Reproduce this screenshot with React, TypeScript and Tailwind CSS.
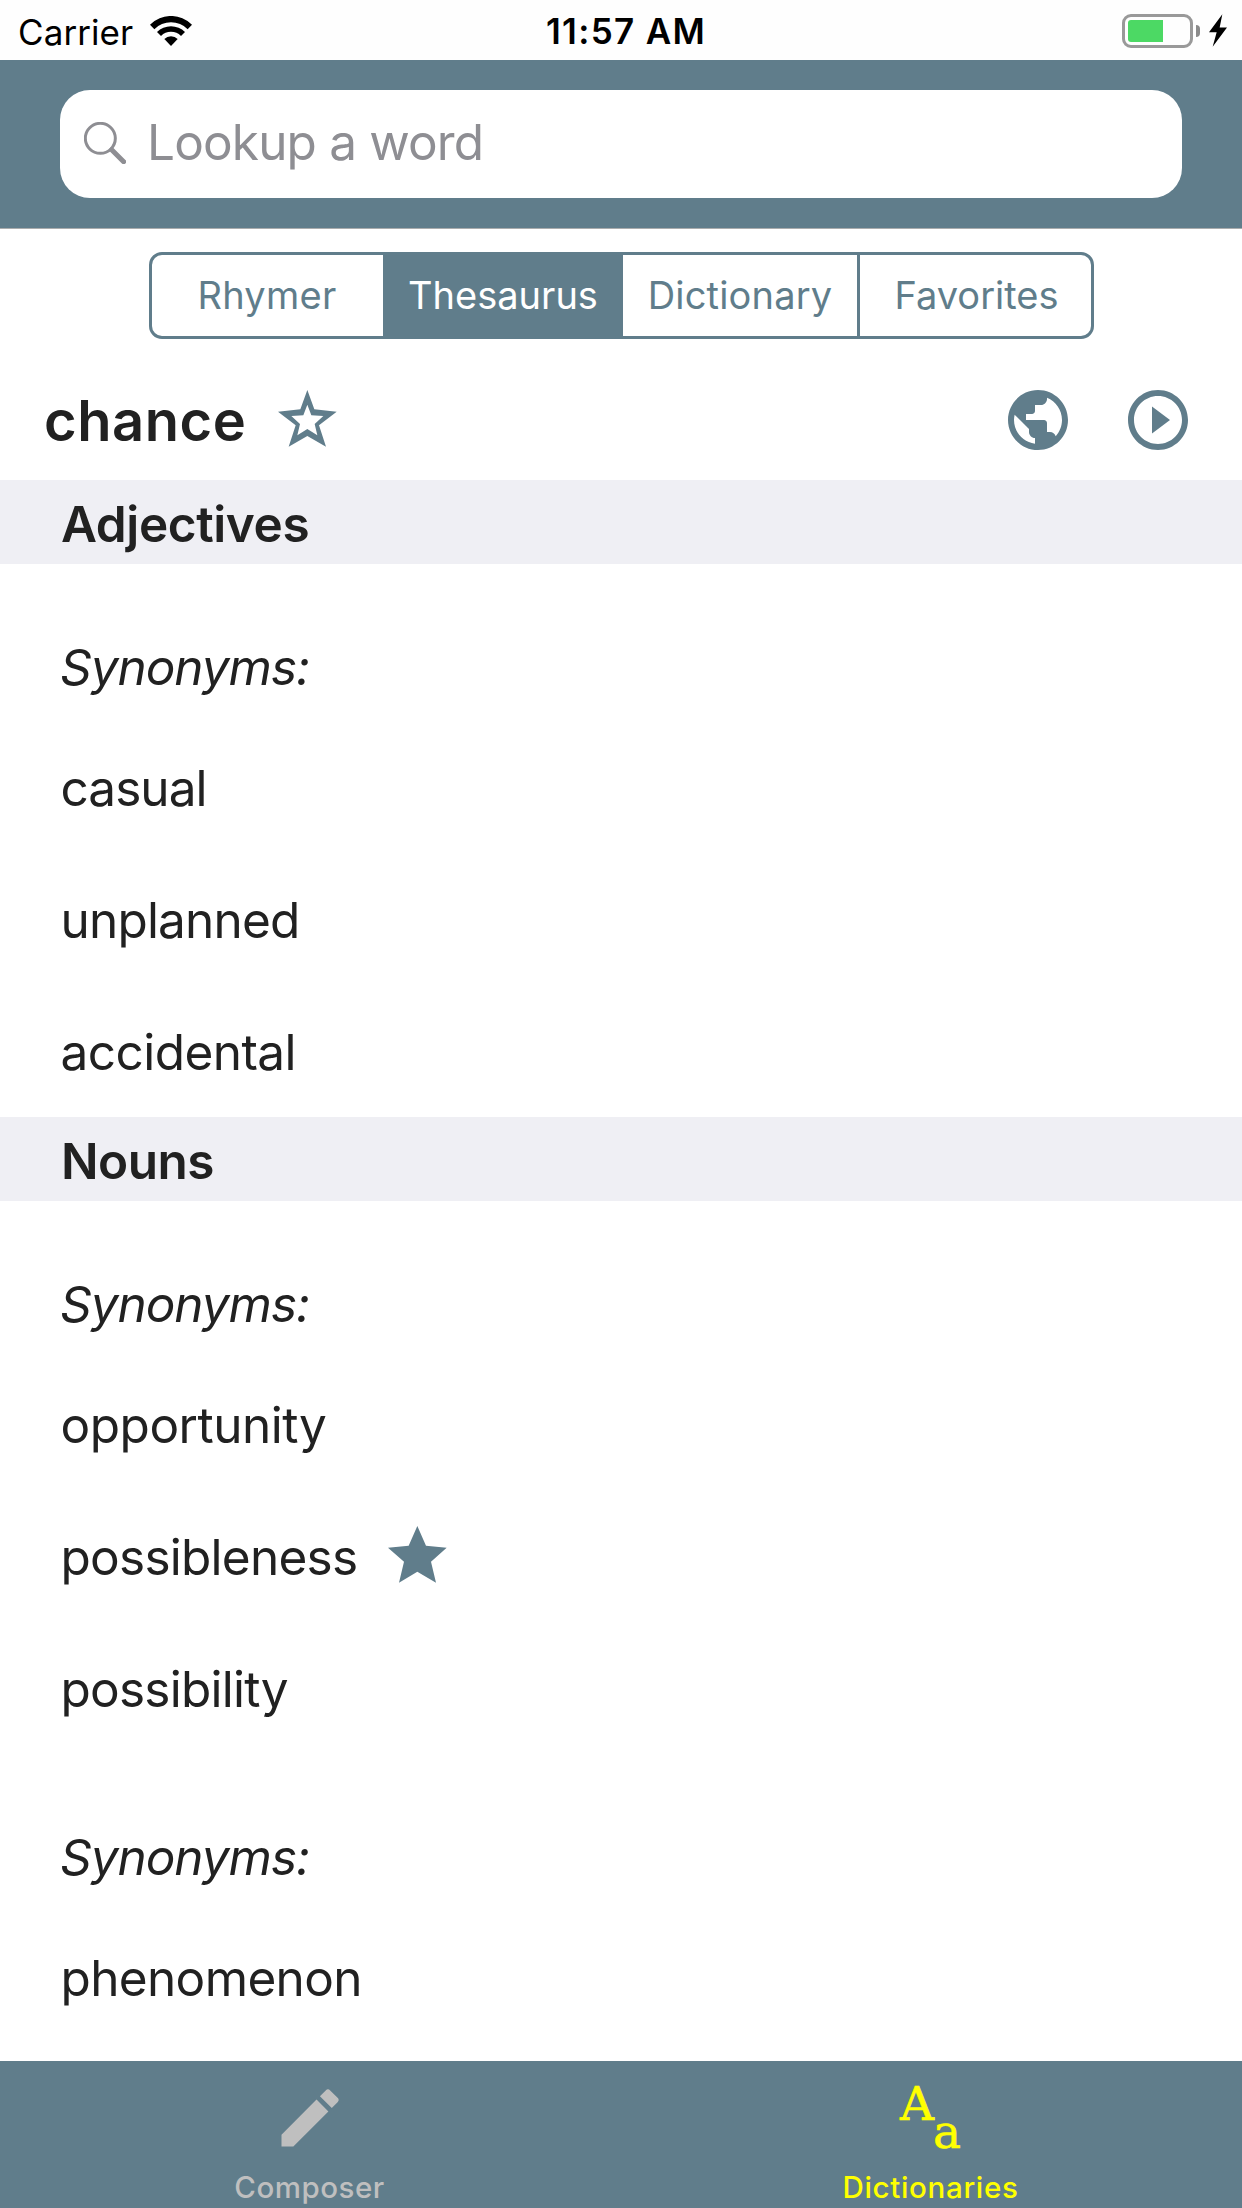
import { MdEdit, MdPlayCircleOutline, MdPublic } from "react-icons/md";

type Word = { text: string; tracking: string; favorite?: boolean };
type Section = { title: string; titleTracking: string; groups: Word[][] };

const sections: Section[] = [
  {
    title: "Adjectives",
    titleTracking: "tracking-[-0.4px]",
    groups: [
      [
        { text: "casual", tracking: "tracking-[-0.95px]" },
        { text: "unplanned", tracking: "tracking-[-0.81px]" },
        { text: "accidental", tracking: "tracking-[-0.55px]" },
      ],
    ],
  },
  {
    title: "Nouns",
    titleTracking: "tracking-[-0.5px]",
    groups: [
      [
        { text: "opportunity", tracking: "tracking-[-0.47px]" },
        { text: "possibleness", tracking: "tracking-[-0.74px]", favorite: true },
        { text: "possibility", tracking: "tracking-[-0.75px]" },
      ],
      [{ text: "phenomenon", tracking: "tracking-[-0.64px]" }],
    ],
  },
];

const segments = [
  { label: "Rhymer", className: "w-[231px] pr-[1px] tracking-[0.27px]" },
  { label: "Thesaurus", className: "w-[240px] bg-[#607d8b] text-white" },
  { label: "Dictionary", className: "w-[234px] tracking-[0.17px]" },
  { label: "Favorites", className: "flex-1 border-l-[3px] border-[#607d8b] pl-[2px]" },
];

function WifiIcon() {
  return (
    <svg className="h-[30px] w-[42px]" viewBox="0 0 126 90">
      <path d="M0 26A89 89 0 0 1 126 26L113 39.500A71 71 0 0 0 13 39.500Z" />
      <path d="M21 48A59 59 0 0 1 105 48L93 60A42 42 0 0 0 33 60Z" />
      <path d="M43 69A28 28 0 0 1 83 69L63 90Z" />
    </svg>
  );
}

function Battery() {
  return (
    <div className="flex items-center">
      <div className="h-[34px] w-[71px] rounded-[9px] border-[3px] border-[#999] p-[3px]">
        <div className="h-full w-[35px] rounded-l-[3px] bg-[#4cd964]" />
      </div>
      <div className="ml-[3px] h-[12px] w-[4px] rounded-r-full bg-[#8a8a8a]" />
      <svg className="ml-[9px] h-[33px] w-[18px]" viewBox="0 0 54 98">
        <path d="M40 0L0 54H23L11 98L54 40H32Z" />
      </svg>
    </div>
  );
}

function SearchIcon() {
  return (
    <svg className="h-[42px] w-[42px]" viewBox="0 0 126 126" fill="none" stroke="#8e8e93">
      <circle cx="49" cy="49" r="45" strokeWidth="9" />
      <path d="M83 83L119 119" strokeWidth="15" strokeLinecap="round" />
    </svg>
  );
}

function StarOutline() {
  return (
    <svg className="h-[57px] w-[59px]" viewBox="0 0 177 171" fill="#607d8b">
      <path
        fillRule="evenodd"
        d="M88 0L109 58L176 65L123 106L144 170L88 138L32 170L53 106L0 65L67 58ZM88 44L76 76L40 78L66 102L58 136L88 117L118 136L110 102L136 78L100 76Z"
      />
    </svg>
  );
}

function StarFilled() {
  return (
    <svg className="h-[57px] w-[59px]" viewBox="0 0 177 171" fill="#607d8b">
      <path d="M88 0L114 59L176 65L129 107L144 170L88 137L33 170L48 107L0 65L62 59Z" />
    </svg>
  );
}

export default function App() {
  return (
    <div className="flex h-[2208px] w-[1242px] flex-col overflow-hidden bg-white font-['Inter',sans-serif] text-[#212121]">
      <div className="grid h-[60px] grid-cols-3 bg-[#fefefe] text-[35px] leading-[60px] text-black">
        <div className="flex items-center pl-[18px]">
          <span className="relative top-[1px] tracking-[0.08px]">Carrier</span>
          <span className="ml-[17px]">
            <WifiIcon />
          </span>
        </div>
        <div className="pt-[1px] pl-[10px] text-center font-semibold tracking-[1.33px]">11:57 AM</div>
        <div className="flex items-center justify-end pr-[15px]">
          <Battery />
        </div>
      </div>

      <header className="h-[169px] border-b border-[#aaacad] bg-[#607d8b] px-[60px] pt-[30px]">
        <div className="flex h-[108px] items-center rounded-[30px] bg-white pl-[24px]">
          <span className="pb-[2px]">
            <SearchIcon />
          </span>
          <span className="ml-[21px] pb-[4px] text-[49.5px] tracking-[-0.84px] text-[#8e8e93]">
            Lookup a word
          </span>
        </div>
      </header>

      <nav className="mt-[23px] ml-[149px] flex h-[87px] w-[945px] overflow-hidden rounded-[13px] border-[3px] border-[#607d8b] text-[38px] text-[#607d8b]">
        {segments.map((s) => (
          <div key={s.label} className={`flex items-center justify-center ${s.className}`}>
            {s.label}
          </div>
        ))}
      </nav>

      <div className="mt-[21px] flex h-[120px] items-center pr-[48px] pl-[44px]">
        <h1 className="pt-[1px] text-[56px] font-semibold tracking-[0.55px]">chance</h1>
        <span className="ml-[32px] pb-[3px]">
          <StarOutline />
        </span>
        <div className="ml-auto flex gap-[48px] text-[72px] text-[#607d8b]">
          <MdPublic />
          <MdPlayCircleOutline />
        </div>
      </div>

      <main className="flex-1 text-[49.5px]">
        {sections.map((section) => (
          <section key={section.title}>
            <h2
              className={`flex h-[84px] items-center bg-[#efeff4] pt-[4px] pl-[61px] font-semibold ${section.titleTracking}`}
            >
              {section.title}
            </h2>
            {section.groups.map((words) => (
              <div key={words[0].text}>
                <div className="flex h-[157px] items-center pt-[49px] pl-[60px] tracking-[-1.05px] italic">
                  Synonyms:
                </div>
                {words.map((w) => (
                  <div key={w.text} className="flex h-[132px] items-center pl-[60.5px]">
                    <span className={`pt-[2px] ${w.tracking}`}>{w.text}</span>
                    {w.favorite && (
                      <span className="ml-[31px] pb-[3px]">
                        <StarFilled />
                      </span>
                    )}
                  </div>
                ))}
              </div>
            ))}
          </section>
        ))}
      </main>

      <footer className="grid h-[147px] grid-cols-2 bg-[#607d8b] text-[29.5px] font-medium">
        <div className="flex flex-col items-center pr-[2px] text-[#bfbfbf]">
          <MdEdit className="mt-[19px] h-[76px] w-[76px]" />
          <span className="mt-[13px] leading-[36px] tracking-[0.51px]">Composer</span>
        </div>
        <div className="flex flex-col items-center pr-[2px] text-[#ffff00]">
          <div className="mt-[19px] flex h-[76px] font-['DejaVu_Serif',serif] text-[47px] leading-[48px] font-normal [-webkit-text-stroke:0.6px_#ffff00]">
            <span>A</span>
            <span className="-ml-[1px] pt-[28px]">a</span>
          </div>
          <span className="mt-[13px] leading-[36px] tracking-[0.67px]">Dictionaries</span>
        </div>
      </footer>
    </div>
  );
}
